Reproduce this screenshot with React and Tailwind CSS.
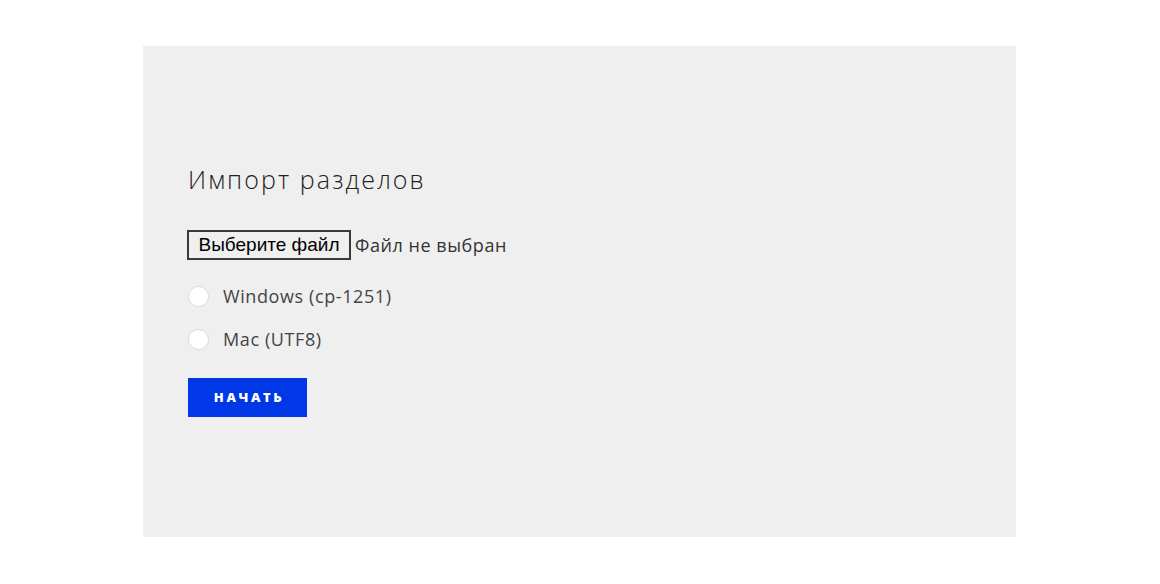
export default function App() {
  return (
    <div className="w-[1160px] h-[584px] bg-white pt-[46px] pl-[143px]">
      <div className="w-[873px] h-[491px] bg-[#efefef] pl-[45px] pt-[116px]" style={{ fontFamily: '"Open Sans", "Noto Sans", sans-serif' }}>
        <h2 className="text-[25px] font-light text-[#222] leading-[34px] tracking-[2.1px]">Импорт разделов</h2>
        <div className="mt-[34px] flex items-center h-[30px]">
          <div className="h-[30px] w-[164px] -ml-px border-2 border-[#3a3a3a] bg-[#efefef] flex items-center justify-center text-[19px] text-black" style={{ fontFamily: '"Liberation Sans", Arial, sans-serif' }}>
            Выберите файл
          </div>
          <span className="ml-[4px] text-[18px] text-[#333] tracking-[0.55px]">Файл не выбран</span>
        </div>
        <div className="mt-[22px] flex items-center h-[28px]">
          <div className="w-[21px] h-[21px] rounded-full bg-white border border-[#dcdcdc]" />
          <span className="ml-[14px] text-[18px] text-[#444] tracking-[0.6px]">Windows (cp-1251)</span>
        </div>
        <div className="mt-[15px] flex items-center h-[28px]">
          <div className="w-[21px] h-[21px] rounded-full bg-white border border-[#dcdcdc]" />
          <span className="ml-[14px] text-[18px] text-[#444] tracking-[0.6px]">Mac (UTF8)</span>
        </div>
        <button className="mt-[25px] w-[119px] h-[39px] bg-[#0038e8] text-white text-[13px] font-extrabold tracking-[2.6px] pl-[3px] flex items-center justify-center">
          НАЧАТЬ
        </button>
      </div>
    </div>
  );
}
